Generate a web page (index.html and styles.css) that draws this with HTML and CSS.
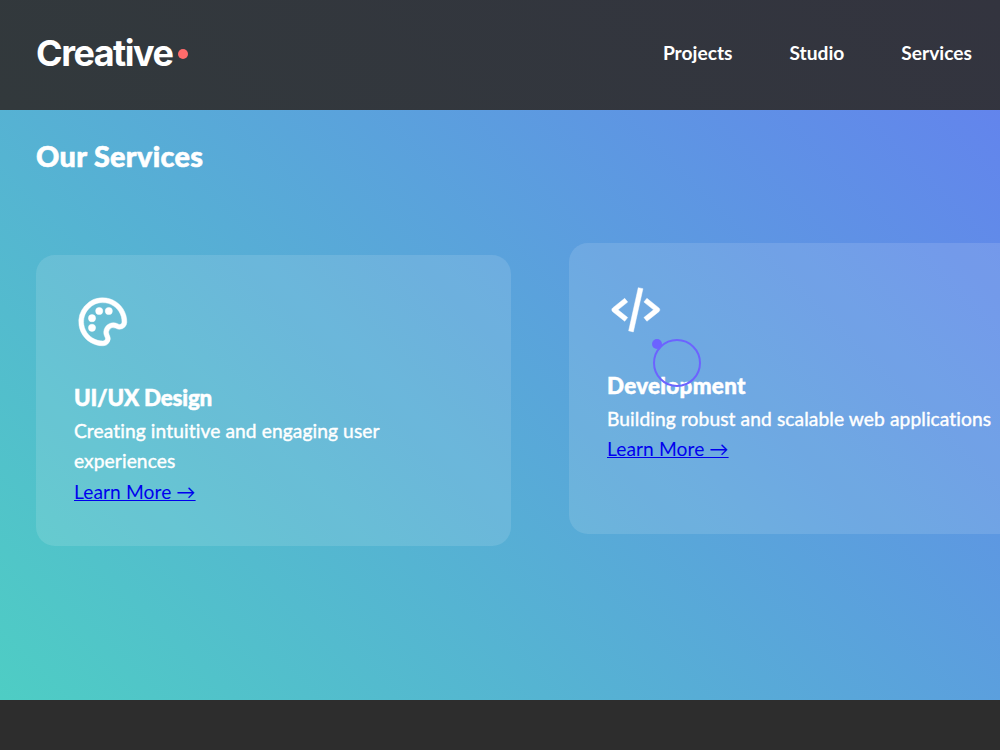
FILE: index.html
```
<!DOCTYPE html>
<html lang="en">
<head>
  <meta charset="UTF-8">
  <title>Creative Studio</title>
  <link rel="stylesheet" href="styles.css">
</head>
<body>
  <!-- Custom cursor -->
  <div class="cursor"></div>
  <div class="cursor-follower"></div>

  <header class="header">
    <div class="logo">Creative<span class="logo-dot"></span></div>
    <nav class="nav-links">
      <a href="#projects">Projects</a>
      <a href="#studio">Studio</a>
      <a href="#services">Services</a>
    </nav>
  </header>

  <!-- Services Section -->
  <section class="services" id="services">
    <h2>Our Services</h2>
    <div class="services-grid">
      <div class="service-card">
        <svg class="icon" viewBox="0 0 24 24">
          <path d="M13.4 2.096a10.08 10.08 0 0 0-8.937 3.331A10.054 10.054 0 0 0 2.096 13.4c.53 3.894 3.458 7.207 7.285 8.246a9.982 9.982 0 0 0 2.618.354l.142-.001a3.001 3.001 0 0 0 2.516-1.426 2.989 2.989 0 0 0 .153-2.879l-.199-.416a1.919 1.919 0 0 1 .094-1.912 2.004 2.004 0 0 1 2.576-.755l.412.197c.412.198.85.299 1.301.299A3.022 3.022 0 0 0 22 12.14a9.935 9.935 0 0 0-.353-2.76c-1.04-3.826-4.353-6.754-8.247-7.284zm5.158 10.909-.412-.197c-1.828-.878-4.07-.198-5.135 1.494-.738 1.176-.813 2.576-.204 3.842l.199.416a.983.983 0 0 1-.051.961.992.992 0 0 1-.844.479h-.112a8.061 8.061 0 0 1-2.095-.283c-3.063-.831-5.403-3.479-5.826-6.586-.321-2.355.352-4.623 1.893-6.389a8.002 8.002 0 0 1 7.16-2.664c3.107.423 5.755 2.764 6.586 5.826.198.73.293 1.474.282 2.207-.012.807-.845 1.183-1.441.894z"/>
          <circle cx="7.5" cy="14.5" r="1.5"/>
          <circle cx="7.5" cy="10.5" r="1.5"/>
          <circle cx="10.5" cy="7.5" r="1.5"/>
          <circle cx="14.5" cy="7.5" r="1.5"/>
        </svg>
        <h3 class="design-title">UI/UX Design</h3>
        <p>Creating intuitive and engaging user experiences</p>
        <a href="#">Learn More →</a>
      </div>
      <div class="service-card raised">
        <svg class="icon" viewBox="0 0 24 24">
          <path d="m7.375 16.781 1.25-1.562L4.601 12l4.024-3.219-1.25-1.562-5 4a1 1 0 0 0 0 1.562l5 4zm9.25-9.562-1.25 1.562L19.399 12l-4.024 3.219 1.25 1.562 5-4a1 1 0 0 0 0-1.562l-5-4zm-1.649-4.003-4 18-1.953-.434 4-18z"/>
        </svg>
        <h3>Development</h3>
        <p>Building robust and scalable web applications</p>
        <a href="#">Learn More →</a>
      </div>
    </div>
  </section>
</body>
</html>
```
FILE: styles.css
```
* {
  margin: 0;
  padding: 0;
  box-sizing: border-box;
}
body {
  font-family: Lato, "Open Sans", sans-serif;
  font-size: 19.2px;
  line-height: 1.6;
  font-variant-ligatures: none;
  color: #fff;
  background: #2d2d2d;
  height: 750px;
  overflow: hidden;
}
.header {
  height: 110px;
  padding: 0 28px 3px 36px;
  display: flex;
  align-items: center;
  justify-content: space-between;
  background: linear-gradient(45deg, #32393c, #33343f);
}
.logo {
  display: flex;
  align-items: center;
  gap: 6px;
  padding-top: 1px;
  font-family: Inter, sans-serif;
  font-size: 36px;
  font-weight: 700;
  letter-spacing: -1.5px;
}
.logo-dot {
  width: 10px;
  height: 10px;
  border-radius: 50%;
  background: #ff6b6b;
}
.nav-links {
  display: flex;
  gap: 57px;
}
.nav-links a {
  color: #fff;
  font-weight: 700;
  text-decoration: none;
}
.services {
  height: 590px;
  padding: 23px 36px 0;
  background: linear-gradient(45deg, #4ecdc4 0%, #6c63ff 146%);
}
h2 {
  font-size: 28.8px;
  font-weight: 900;
  letter-spacing: 0.33px;
  -webkit-text-stroke: 0.6px #fff;
}
.services-grid {
  display: grid;
  grid-template-columns: 475px 475px;
  gap: 58px;
  margin-top: 76px;
}
.service-card {
  height: 291px;
  padding: 38px;
  border-radius: 19px;
  background: rgba(255, 255, 255, 0.12);
}
.service-card.raised {
  transform: translateY(-12px);
}
.icon {
  display: block;
  width: 57.6px;
  height: 57.6px;
  margin-bottom: 29.2px;
  fill: #fff;
  stroke: #fff;
  stroke-width: 0.2;
}
h3 {
  font-size: 22.4px;
  font-weight: 900;
  letter-spacing: 0.3px;
  -webkit-text-stroke: 0.5px #fff;
}
.design-title {
  letter-spacing: -0.2px;
}
.service-card p {
  letter-spacing: 0.1px;
  -webkit-text-stroke: 0.4px #fff;
}
.service-card a {
  color: #0000ee;
  letter-spacing: 0.08px;
}
.cursor {
  position: absolute;
  z-index: 2;
  left: 652px;
  top: 339px;
  width: 10px;
  height: 10px;
  border-radius: 50%;
  background: #6c63ff;
}
.cursor-follower {
  position: absolute;
  z-index: 2;
  left: 652.5px;
  top: 339px;
  width: 48px;
  height: 48px;
  border: 2px solid #6c63ff;
  border-radius: 50%;
}
```
